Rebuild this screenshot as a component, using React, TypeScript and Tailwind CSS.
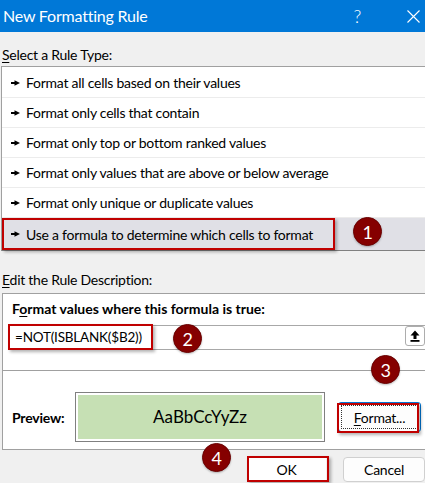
const rules = [
  "Format all cells based on their values",
  "Format only cells that contain",
  "Format only top or bottom ranked values",
  "Format only values that are above or below average",
  "Format only unique or duplicate values",
  "Use a formula to determine which cells to format",
];

function Pointer() {
  return (
    <svg width="9" height="6" viewBox="0 0 9 6" className="shrink-0">
      <rect x="0" y="2" width="4" height="2" fill="#000" />
      <path d="M3.5 0.2 L9 3 L3.5 5.8 Z" fill="#000" />
    </svg>
  );
}

function Badge({ n, className }: { n: number; className: string }) {
  return (
    <div
      className={`absolute w-[29px] h-[29px] rounded-full bg-[#850000] border border-[#6a0000] flex items-center justify-center text-white text-[18px] leading-none shadow-[0_1px_2px_rgba(0,0,0,0.25)] ${className}`}
    >
      {n}
    </div>
  );
}

export default function App() {
  return (
    <div className="relative w-[425px] h-[483px] overflow-hidden bg-[#f0f0f0] font-['Lato',sans-serif] text-black text-[14px] tracking-[-0.25px]">
      {/* title bar */}
      <div className="h-[32px] bg-[#0078d7] text-white flex items-center pl-[3px]">
        <span className="text-[16px] tracking-[-0.2px]">New Formatting Rule</span>
        <span className="ml-auto mr-[46px] text-[18px] font-light">?</span>
        <svg width="13" height="13" viewBox="0 0 13 13" className="mr-[5px]">
          <path d="M0.5 0.5 L12.5 12.5 M12.5 0.5 L0.5 12.5" stroke="#fff" strokeWidth="1.1" />
        </svg>
      </div>

      <div className="mt-[14px] h-[18px] leading-[18px] pl-[2px]">
        <span className="underline underline-offset-2">S</span>elect a Rule Type:
      </div>

      {/* rule list */}
      <div className="mt-[2px] ml-[1px] h-[185px] border border-r-0 border-[#a0a0a0] border-b-[#808080] bg-white pt-[1px]">
        {rules.map((r, i) => (
          <div
            key={r}
            className={`h-[30px] flex items-center gap-[6px] pl-[9px] ${
              i === rules.length - 1 ? "bg-[#e0e0e6] h-[32px]" : "border-b border-[#ececec]"
            }`}
          >
            <Pointer />
            <span>{r}</span>
          </div>
        ))}
      </div>

      <div className="mt-[20px] h-[18px] leading-[18px] pl-[2px]">
        <span className="underline underline-offset-2">E</span>dit the Rule Description:
      </div>

      {/* description box */}
      <div className="mt-[4px] ml-[2px] h-[157px] border border-r-0 border-[#a0a0a0] bg-white">
        <div className="mt-[6px] h-[18px] leading-[18px] pl-[9px] font-bold tracking-[0px]">
          F<span className="underline underline-offset-2">o</span>rmat values where this formula is true:
        </div>
        <div className="mt-[7px] ml-[5px] h-[25px] border border-[#a8a8a8] border-r-0 flex items-center pl-[6px]">
          <span className="text-[13.5px] tracking-[-0.2px]">=NOT(ISBLANK($B2))</span>
          <div className="ml-auto mb-[4px] w-[20px] h-[20px] border border-[#adadad] rounded-[3px] bg-white flex items-center justify-center">
            <svg width="10" height="12" viewBox="0 0 10 12">
              <path d="M5 0.5 L9.5 5.5 H6.5 V9 H3.5 V5.5 H0.5 Z" fill="#000" />
              <rect x="0.5" y="10" width="9" height="1.8" fill="#000" />
            </svg>
          </div>
        </div>
        <div className="mt-[20px] border-t border-[#a0a0a0]" />
        <div className="mt-[21px] flex items-center">
          <div className="w-[72px] pl-[9px] font-bold tracking-[-0.2px]">Preview:</div>
          <div className="w-[250px] h-[50px] border border-[#808080] p-[2px] bg-white">
            <div className="w-full h-full bg-[#c6e0b4] flex items-center justify-center text-[17px] tracking-[0px]">
              AaBbCcYyZz
            </div>
          </div>
          <div className="ml-[13px] w-[83px] h-[30px] border border-[#0078d7] rounded-[3px] bg-[#fdfdfd] p-[2px]">
            <div className="w-full h-full border border-dotted border-[#333] flex items-center justify-center">
              <span>
                <span className="underline underline-offset-2">F</span>ormat...
              </span>
            </div>
          </div>
        </div>
      </div>

      {/* buttons */}
      <div className="mt-[7px] flex pl-[247px] gap-[17px]">
        <div className="w-[81px] h-[25px] bg-white flex items-center justify-center">OK</div>
        <div className="w-[84px] h-[25px] border border-[#d0d0d0] rounded-[4px] bg-[#fdfdfd] flex items-center justify-center">
          Cancel
        </div>
      </div>

      {/* annotation boxes */}
      <div className="absolute left-[2px] top-[218px] w-[333px] h-[32px] border-2 border-[#c00000] shadow-[2px_2px_3px_rgba(0,0,0,0.3)]" />
      <div className="absolute left-[8px] top-[324px] w-[145px] h-[26px] border-2 border-[#c00000] shadow-[2px_2px_3px_rgba(0,0,0,0.3)]" />
      <div className="absolute left-[337px] top-[403px] w-[82px] h-[30px] border-2 border-[#c00000] shadow-[2px_2px_3px_rgba(0,0,0,0.3)]" />
      <div className="absolute left-[247px] top-[456px] w-[82px] h-[26px] border-2 border-[#c00000] shadow-[2px_2px_3px_rgba(0,0,0,0.3)]" />

      <Badge n={1} className="left-[353px] top-[217px]" />
      <Badge n={2} className="left-[173px] top-[324px]" />
      <Badge n={3} className="left-[371px] top-[355px]" />
      <Badge n={4} className="left-[202px] top-[443px]" />
    </div>
  );
}
